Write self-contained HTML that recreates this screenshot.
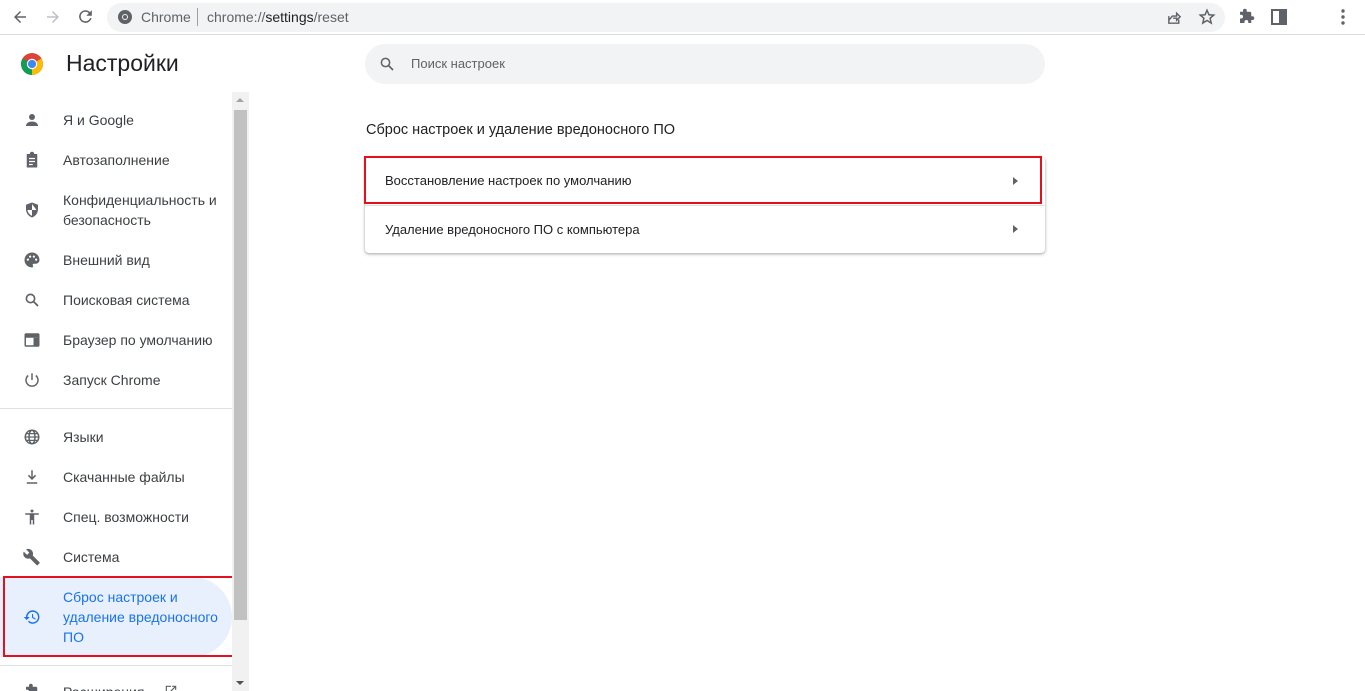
<!DOCTYPE html>
<html><head><meta charset="utf-8"><style>
*{margin:0;padding:0;box-sizing:border-box}
html,body{width:1365px;height:691px;overflow:hidden}
body{background:#fff;font-family:"Liberation Sans",Arial,sans-serif;position:relative;color:#202124}
.abs{position:absolute}
.top{position:absolute;left:0;top:0;width:1365px;height:35px;background:#fff;border-bottom:1px solid #dadce0}
.omni{position:absolute;left:107px;top:3px;width:1118px;height:29px;border-radius:15px;background:#f1f3f4}
.item{position:absolute;left:0;width:232px;font-size:14px;color:#3c4043;display:flex;align-items:center}
.item svg{position:absolute;left:23px}
.item span{position:absolute;left:63px;line-height:20px}
.sep{position:absolute;left:0;width:232px;height:1px;background:#e0e0e0}
</style></head><body>
<div class="top">
<svg class="abs" style="left:11px;top:8px" width="18" height="18" viewBox="0 0 24 24"><path d="M20 11H7.8l5.6-5.6L12 4l-8 8 8 8 1.4-1.4L7.8 13H20z" fill="#5f6368"/></svg>
<svg class="abs" style="left:44px;top:8px" width="18" height="18" viewBox="0 0 24 24"><path d="M4 11h12.2l-5.6-5.6L12 4l8 8-8 8-1.4-1.4 5.6-5.6H4z" fill="#bdc1c6"/></svg>
<svg class="abs" style="left:76px;top:7px" width="19" height="19" viewBox="0 0 24 24"><path d="M17.6 6.4A8 8 0 1 0 19.7 14h-2.1a6 6 0 1 1-1.4-6.2L13 11h7V4z" fill="#5f6368"/></svg>
<div class="omni"></div>
<svg class="abs" style="left:117px;top:9px" width="16" height="16" viewBox="0 0 16 16"><circle cx="8" cy="8" r="7" fill="#5f6368"/><circle cx="8" cy="8" r="3" fill="#f1f3f4"/><circle cx="8" cy="8" r="2" fill="#5f6368"/></svg>
<div class="abs" style="left:141px;top:9px;font-size:14px;color:#5f6368">Chrome</div>
<div class="abs" style="left:197px;top:8px;width:1px;height:18px;background:#9aa0a6"></div>
<div class="abs" style="left:207px;top:9px;font-size:14px;color:#5f6368">chrome://<span style="color:#202124">settings</span>/reset</div>
<svg class="abs" style="left:1166px;top:9px" width="17" height="17" viewBox="0 0 24 24"><path d="M4 10v10h14v-5M4 16l5-6h6V6l5 5-5 5v-3H10" fill="none" stroke="#5f6368" stroke-width="2"/></svg>
<svg class="abs" style="left:1198px;top:8px" width="18" height="18" viewBox="0 0 24 24"><path d="M12 3l2.6 6 6.4.5-4.9 4.2 1.5 6.3L12 16.6 6.4 20l1.5-6.3L3 9.5 9.4 9z" fill="none" stroke="#5f6368" stroke-width="2"/></svg>
<svg class="abs" style="left:1237px;top:8px" width="18" height="18" viewBox="0 0 24 24"><path d="M20.5 11H19V7a2 2 0 0 0-2-2h-4V3.5a2.5 2.5 0 0 0-5 0V5H4v4h1.5a2.5 2.5 0 0 1 0 5H4v6h6v-1.5a2.5 2.5 0 0 1 5 0V20h4v-4h1.5a2.5 2.5 0 0 0 0-5z" fill="#5f6368"/></svg>
<svg class="abs" style="left:1271px;top:9px" width="16" height="16" viewBox="0 0 16 16"><rect x="1" y="1" width="14" height="14" fill="none" stroke="#5f6368" stroke-width="2"/><rect x="8" y="1" width="7" height="14" fill="#5f6368"/></svg>
<svg class="abs" style="left:1341px;top:9px" width="4" height="16"><circle cx="2" cy="2" r="1.7" fill="#5f6368"/><circle cx="2" cy="8" r="1.7" fill="#5f6368"/><circle cx="2" cy="14" r="1.7" fill="#5f6368"/></svg>
</div>

<svg class="abs" style="left:20px;top:52px" width="24" height="24" viewBox="0 0 24 24"><circle cx="12" cy="12" r="11" fill="#db4437"/><path d="M12 12 L2.5 17.5 A11 11 0 0 0 12 23 Z" fill="#0f9d58"/><path d="M12 12 L12 23 A11 11 0 0 0 21.5 6.5 Z" fill="#fbbc05"/><path d="M12 12 L2.5 17.5 A11 11 0 0 1 1 12 A11 11 0 0 1 2.5 6.5 Z" fill="#0f9d58"/><circle cx="12" cy="12" r="5.2" fill="#fff"/><circle cx="12" cy="12" r="4.1" fill="#4285f4"/></svg>
<div class="abs" style="left:66px;top:50px;font-size:23px;color:#202124">Настройки</div>

<div class="item" style="top:110px;height:20px"><svg width="18" height="18" viewBox="0 0 24 24"><circle cx="12" cy="8" r="4" fill="#5f6368"/><path d="M4 20c0-4 4-6 8-6s8 2 8 6z" fill="#5f6368"/></svg><span>Я и Google</span></div>
<div class="item" style="top:150px;height:20px"><svg width="18" height="18" viewBox="0 0 24 24"><path d="M5 4h4a3 3 0 0 1 6 0h4v18H5z" fill="#5f6368"/><path d="M8 10h8M8 14h8M8 18h5" stroke="#fff" stroke-width="1.6"/></svg><span>Автозаполнение</span></div>
<div class="item" style="top:190px;height:40px"><svg width="18" height="18" viewBox="0 0 24 24"><path d="M12 2l8 3v6c0 5-3.5 9.5-8 11-4.5-1.5-8-6-8-11V5z" fill="#5f6368"/><path d="M12 4v8H6c.4 3.5 3 6.5 6 7.8V12h6" fill="#fff"/></svg><span>Конфиденциальность и<br>безопасность</span></div>
<div class="item" style="top:250px;height:20px"><svg width="18" height="18" viewBox="0 0 24 24"><path d="M12 2a10 10 0 0 0 0 20c1 0 1.5-.7 1.5-1.5 0-.8-.6-1.2-.6-2 0-.9.7-1.5 1.6-1.5H17a5 5 0 0 0 5-5c0-5.5-4.5-10-10-10z" fill="#5f6368"/><circle cx="6.5" cy="11.5" r="1.5" fill="#fff"/><circle cx="9.5" cy="7.5" r="1.5" fill="#fff"/><circle cx="14.5" cy="7.5" r="1.5" fill="#fff"/><circle cx="17.5" cy="11.5" r="1.5" fill="#fff"/></svg><span>Внешний вид</span></div>
<div class="item" style="top:290px;height:20px"><svg width="18" height="18" viewBox="0 0 24 24"><circle cx="10" cy="10" r="5.5" fill="none" stroke="#5f6368" stroke-width="2.2"/><path d="M14 14l6 6" stroke="#5f6368" stroke-width="2.4"/></svg><span>Поисковая система</span></div>
<div class="item" style="top:330px;height:20px"><svg width="18" height="18" viewBox="0 0 24 24"><rect x="3" y="4" width="18" height="16" rx="1" fill="none" stroke="#5f6368" stroke-width="2"/><rect x="3" y="4" width="18" height="5" fill="#5f6368"/><rect x="14" y="9" width="7" height="11" fill="#5f6368"/></svg><span>Браузер по умолчанию</span></div>
<div class="item" style="top:370px;height:20px"><svg width="18" height="18" viewBox="0 0 24 24"><path d="M12 3v9" stroke="#5f6368" stroke-width="2"/><path d="M7 6a8 8 0 1 0 10 0" fill="none" stroke="#5f6368" stroke-width="2"/></svg><span>Запуск Chrome</span></div>
<div class="sep" style="top:408px"></div>
<div class="item" style="top:427px;height:20px"><svg width="18" height="18" viewBox="0 0 24 24"><circle cx="12" cy="12" r="9" fill="none" stroke="#5f6368" stroke-width="2"/><ellipse cx="12" cy="12" rx="4" ry="9" fill="none" stroke="#5f6368" stroke-width="2"/><path d="M3 12h18M4.5 7.5h15M4.5 16.5h15" stroke="#5f6368" stroke-width="1.6"/></svg><span>Языки</span></div>
<div class="item" style="top:467px;height:20px"><svg width="18" height="18" viewBox="0 0 24 24"><path d="M11 3h2v9l3-3 1.5 1.5L12 16l-5.5-5.5L8 9l3 3zM5 19h14v2H5z" fill="#5f6368"/></svg><span>Скачанные файлы</span></div>
<div class="item" style="top:507px;height:20px"><svg width="18" height="18" viewBox="0 0 24 24"><circle cx="12" cy="4" r="2" fill="#5f6368"/><path d="M3 7h18v2h-6v13h-2v-6h-2v6H9V9H3z" fill="#5f6368"/></svg><span>Спец. возможности</span></div>
<div class="item" style="top:547px;height:20px"><svg width="18" height="18" viewBox="0 0 24 24"><path d="M22 19l-9-9c.9-2.3.4-5-1.5-6.9C9.5 1.1 6.5.7 4.1 1.8L8.4 6.1 5.4 9.1 1 4.9C-.2 7.3.3 10.3 2.3 12.3c1.9 1.9 4.6 2.4 6.9 1.5l9 9c.4.4 1 .4 1.4 0l2.3-2.3c.5-.4.5-1.1.1-1.5z" fill="#5f6368"/></svg><span>Система</span></div>
<div class="abs" style="left:0;top:577px;width:232px;height:80px;background:#e8f0fe;border-radius:0 40px 40px 0"></div>
<div class="item" style="top:587px;height:60px;color:#1a73e8"><svg width="18" height="18" viewBox="0 0 24 24"><path d="M13 3a9 9 0 0 0-9 9H1l4 4 4-4H6a7 7 0 1 1 2 5l-1.4 1.4A9 9 0 1 0 13 3zm-1 5v5l4.3 2.5.7-1.2-3.5-2.1V8z" fill="#1a73e8"/></svg><span>Сброс настроек и<br>удаление вредоносного<br>ПО</span></div>
<div class="abs" style="left:3px;top:576px;width:231px;height:81px;border:2.5px solid #e3101e"></div>
<div class="sep" style="top:665px"></div>
<svg class="abs" style="left:23px;top:683px" width="18" height="18" viewBox="0 0 24 24"><path d="M20.5 11H19V7a2 2 0 0 0-2-2h-4V3.5a2.5 2.5 0 0 0-5 0V5H4v4h1.5a2.5 2.5 0 0 1 0 5H4v6h16z" fill="#5f6368"/></svg>
<div class="abs" style="left:63px;top:684px;font-size:14px;color:#3c4043">Расширения</div>
<svg class="abs" style="left:164px;top:684px" width="14" height="14" viewBox="0 0 24 24"><path d="M19 19H5V5h7V3H3v18h18v-9h-2zM14 3v2h3.6l-9.8 9.8 1.4 1.4L19 6.4V10h2V3z" fill="#5f6368"/></svg>

<div class="abs" style="left:232px;top:92px;width:17px;height:599px;background:#f1f1f1"></div>
<div class="abs" style="left:234px;top:110px;width:13px;height:510px;background:#c1c1c1"></div>
<div class="abs" style="left:236px;top:98px;width:0;height:0;border-left:4px solid transparent;border-right:4px solid transparent;border-bottom:4px solid #a3a3a3"></div>
<div class="abs" style="left:236px;top:681px;width:0;height:0;border-left:4px solid transparent;border-right:4px solid transparent;border-top:4px solid #505050"></div>

<div class="abs" style="left:365px;top:44px;width:680px;height:40px;border-radius:20px;background:#f1f3f4"></div>
<svg class="abs" style="left:378px;top:55px" width="18" height="18" viewBox="0 0 24 24"><circle cx="10" cy="10" r="5.5" fill="none" stroke="#5f6368" stroke-width="2"/><path d="M14 14l6 6" stroke="#5f6368" stroke-width="2.2"/></svg>
<div class="abs" style="left:411px;top:56px;font-size:13px;color:#5f6368">Поиск настроек</div>

<div class="abs" style="left:366px;top:122px;font-size:14.5px;color:#202124">Сброс настроек и удаление вредоносного ПО</div>
<div class="abs" style="left:365px;top:157px;width:680px;height:96px;border-radius:4px;background:#fff;box-shadow:0 1px 2px rgba(60,64,67,.3),0 1px 3px 1px rgba(60,64,67,.15)"></div>
<div class="abs" style="left:365px;top:205px;width:680px;height:1px;background:#e0e0e0"></div>
<div class="abs" style="left:385px;top:173px;font-size:13px;color:#202124">Восстановление настроек по умолчанию</div>
<div class="abs" style="left:385px;top:222px;font-size:13px;color:#202124">Удаление вредоносного ПО с компьютера</div>
<div class="abs" style="left:1013px;top:177px;border-top:4px solid transparent;border-bottom:4px solid transparent;border-left:5px solid #5f6368"></div>
<div class="abs" style="left:1013px;top:225px;border-top:4px solid transparent;border-bottom:4px solid transparent;border-left:5px solid #5f6368"></div>
<div class="abs" style="left:364px;top:156px;width:678px;height:48px;border:2.5px solid #e3101e"></div>
</body></html>
